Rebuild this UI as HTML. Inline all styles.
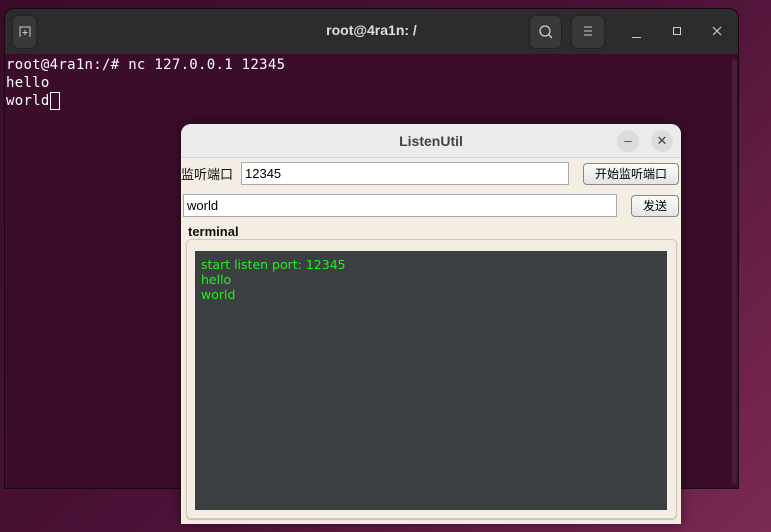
<!DOCTYPE html>
<html><head><style>
*{margin:0;padding:0;box-sizing:border-box}
body{width:771px;height:532px;overflow:hidden;background:linear-gradient(135deg,#3a0c2a 0%,#4a1236 50%,#6a2048 80%,#7a2a55 100%);position:relative;font-family:"Liberation Sans","Noto Sans CJK SC",sans-serif}
.abs{position:absolute}
#term{left:4px;top:8px;width:735px;height:481px;background:#3b0d2b;border-radius:10px 10px 0 0;border:1px solid #1a0512;overflow:hidden}
#tbar{left:0;top:0;width:100%;height:45px;background:#2c2c2c}
.tbtn{background:#383838;border-radius:6px;border:1px solid #222}
.mono{font-family:"DejaVu Sans Mono","Liberation Mono",monospace;font-size:14px;letter-spacing:0.3px;color:#fff;line-height:18px}
#dlg{left:181px;top:124px;width:500px;height:400px;background:#f3ede3;border-radius:10px 10px 0 0;overflow:hidden;box-shadow:0 0 12px rgba(0,0,0,.5)}
#dbar{left:0;top:0;width:100%;height:34px;background:#ebebeb;border-bottom:1px solid #d8d4cc}
.inp{background:#fff;border:1px solid #aaa;font-size:13px;padding-left:3px;line-height:21px}
.btn{background:linear-gradient(#fbfbfb,#e4e4e4);border:1px solid #888;border-radius:4px;font-size:12px;text-align:center;line-height:20px}
.circ{width:22px;height:22px;border-radius:50%;background:#dcdcdc;color:#444;text-align:center;font-size:13px;line-height:22px}
</style></head><body>
<div id="term" class="abs">
 <div id="tbar" class="abs">
  <div class="abs tbtn" style="left:7px;top:6px;width:25px;height:34px"></div>
  <svg class="abs" style="left:14px;top:17px" width="12" height="12"><path d="M1 11V1h10v10M6 4v5M3.5 6.5h5" stroke="#ccc" fill="none"/></svg>
  <div class="abs" style="left:0;width:100%;top:13px;text-align:center;color:#ddd;font-weight:bold;font-size:14px">root@4ra1n: /</div>
  <div class="abs tbtn" style="left:524px;top:6px;width:33px;height:34px"></div>
  <svg class="abs" style="left:533px;top:15px" width="16" height="16"><circle cx="7" cy="7" r="5" stroke="#ccc" fill="none" stroke-width="1.3"/><path d="M10.5 10.5L14 14" stroke="#ccc" stroke-width="1.3"/></svg>
  <div class="abs tbtn" style="left:566px;top:6px;width:34px;height:34px"></div>
  <svg class="abs" style="left:578px;top:16px" width="10" height="12"><path d="M1 2h8M1 6h8M1 10h8" stroke="#ccc"/></svg>
  <div class="abs" style="left:627px;top:28px;width:9px;height:1px;background:#ccc"></div>
  <div class="abs" style="left:668px;top:18px;width:8px;height:8px;border:1px solid #ccc"></div>
  <svg class="abs" style="left:707px;top:17px" width="10" height="10"><path d="M1 1l8 8M9 1l-8 8" stroke="#ccc" stroke-width="1.2"/></svg>
 </div>
 <div class="abs" style="left:727px;top:50px;width:5px;height:425px;background:#4a1c3a;border-radius:3px"></div>
 <div class="abs mono" style="left:1px;top:47px">root@4ra1n:/# nc 127.0.0.1 12345<br>hello<br>world<span style="display:inline-block;width:10px;height:18px;border:1px solid #fff;vertical-align:top"></span></div>
</div>
<div id="dlg" class="abs">
 <div id="dbar" class="abs">
  <div class="abs" style="left:0;width:100%;top:9px;text-align:center;font-weight:bold;font-size:14px;color:#444">ListenUtil</div>
  <div class="abs circ" style="left:436px;top:6px">–</div>
  <div class="abs circ" style="left:470px;top:6px">✕</div>
 </div>
 <div class="abs" style="left:0;top:40px;font-size:13px;color:#111">监听端口</div>
 <div class="abs inp" style="left:60px;top:38px;width:328px;height:23px">12345</div>
 <div class="abs btn" style="left:402px;top:39px;width:96px;height:22px">开始监听端口</div>
 <div class="abs inp" style="left:2px;top:70px;width:434px;height:23px">world</div>
 <div class="abs btn" style="left:450px;top:71px;width:48px;height:22px">发送</div>
 <div class="abs" style="left:7px;top:100px;font-weight:bold;font-size:13px;color:#111">terminal</div>
 <div class="abs" style="left:5px;top:115px;width:491px;height:280px;border:1px solid #cfc8bb;border-radius:5px;box-shadow:0 1px 1px #bbb"></div>
 <div class="abs" style="left:14px;top:127px;width:472px;height:259px;background:#3c3f41;color:#1ef01e;font-size:12.5px;line-height:15px;padding:6px 6px;font-family:'DejaVu Sans',sans-serif">start listen port: 12345<br>hello<br>world</div>
</div>
</body></html>
